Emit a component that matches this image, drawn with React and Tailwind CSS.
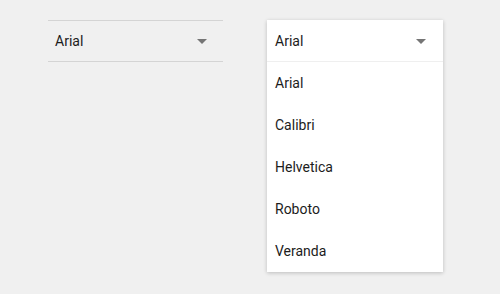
import { useState } from 'react'

const FONTS = ['Arial', 'Calibri', 'Helvetica', 'Roboto', 'Veranda']

function Caret() {
  return (
    <svg width="10" height="5" viewBox="0 0 10 5" className="shrink-0">
      <path d="M0 0h10L5 5z" fill="#757575" />
    </svg>
  )
}

export default function App() {
  const [value, setValue] = useState('Arial')

  return (
    <div className="w-[500px] h-[294px] bg-[#f0f0f0] font-['Roboto',sans-serif] text-[14px] text-[#1c1c1c]">
      <div className="flex items-start gap-[44px] pl-[48px] pt-[20px]">
        {/* closed select */}
        <div className="w-[175px] h-[42px] border-y border-[#d4d4d4] flex items-center justify-between pl-[7px] pr-[16px] pt-[1px]">
          <span>{value}</span>
          <Caret />
        </div>

        {/* open select */}
        <div className="w-[176px] bg-white shadow-[0_1px_4px_rgba(0,0,0,0.22)]">
          <div className="h-[42px] flex items-center justify-between pl-[8px] pr-[17px] pt-[1px] border-b border-[#efefef]">
            <span>{value}</span>
            <Caret />
          </div>
          <ul>
            {FONTS.map((f) => (
              <li
                key={f}
                onClick={() => setValue(f)}
                className="h-[42px] flex items-center pl-[8px] pt-[1px] cursor-pointer"
              >
                {f}
              </li>
            ))}
          </ul>
        </div>
      </div>
    </div>
  )
}
